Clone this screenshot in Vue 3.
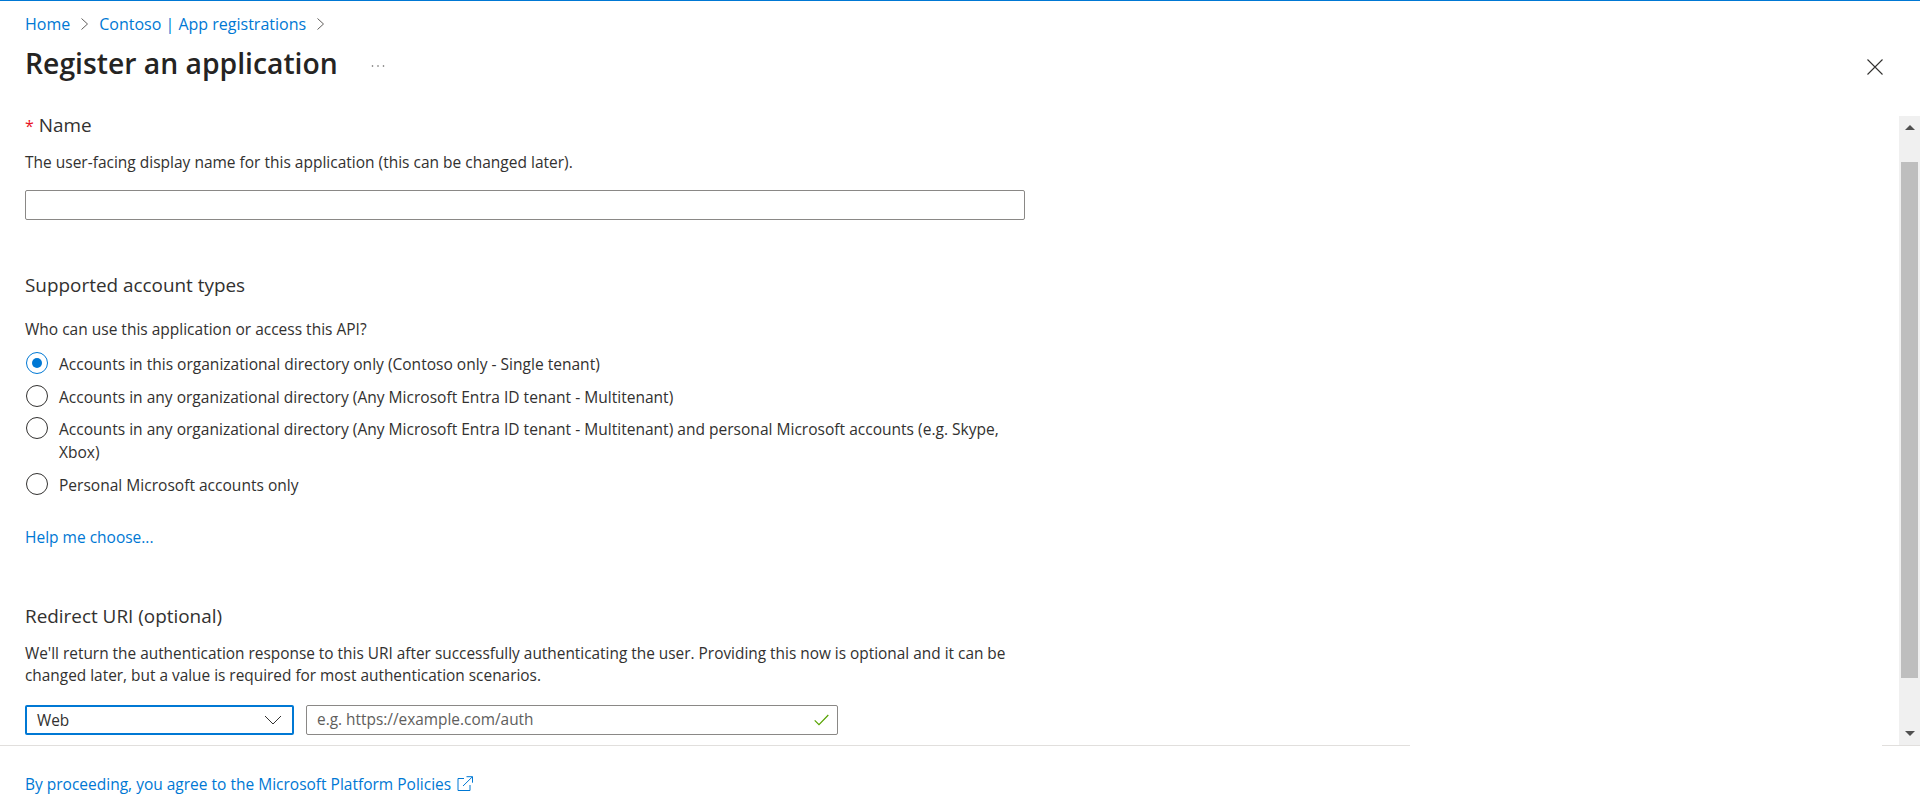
<script setup>
const options = [
  { text: 'Accounts in this organizational directory only (Contoso only - Single tenant)', checked: true },
  { text: 'Accounts in any organizational directory (Any Microsoft Entra ID tenant - Multitenant)', checked: false },
  { text: 'Accounts in any organizational directory (Any Microsoft Entra ID tenant - Multitenant) and personal Microsoft accounts (e.g. Skype, Xbox)', checked: false },
  { text: 'Personal Microsoft accounts only', checked: false },
]
</script>

<template>
  <div class="page">
    <header class="head">
      <nav class="crumbs">
        <a class="link">Home</a>
        <svg class="chev" viewBox="0 0 7 12"><path d="M.5.5L6.5 6l-6 5.5" fill="none" stroke="#605e5c" stroke-width="1"/></svg>
        <a class="link">Contoso | App registrations</a>
        <svg class="chev" viewBox="0 0 7 12"><path d="M.5.5L6.5 6l-6 5.5" fill="none" stroke="#605e5c" stroke-width="1"/></svg>
      </nav>
      <div class="title-row">
        <h1 class="title">Register an application</h1>
        <span class="more">
          <svg width="14" height="4" viewBox="0 0 14 4"><circle cx="1.5" cy="2" r=".8" fill="#605e5c"/><circle cx="7" cy="2" r=".8" fill="#605e5c"/><circle cx="12.5" cy="2" r=".8" fill="#605e5c"/></svg>
        </span>
        <svg class="close" width="16" height="16" viewBox="0 0 16 16"><path d="M.5.5l15 15M15.5.5l-15 15" stroke="#323130" stroke-width="1.1" fill="none"/></svg>
      </div>
    </header>

    <div class="body">
      <main class="content">
        <section class="name-sec">
          <div class="label-lg name-label"><span class="req">*</span> Name</div>
          <p class="text desc">The user-facing display name for this application (this can be changed later).</p>
          <div class="field"></div>
        </section>

        <section class="acct-sec">
          <h2 class="label-lg">Supported account types</h2>
          <p class="text who">Who can use this application or access this API?</p>
          <div class="radios">
            <label v-for="o in options" :key="o.text" class="radio">
              <span class="dot" :class="{ on: o.checked }"></span>
              <span class="text radio-text">{{ o.text }}</span>
            </label>
          </div>
          <a class="link text help">Help me choose...</a>
        </section>

        <section class="uri-sec">
          <h2 class="label-lg">Redirect URI (optional)</h2>
          <p class="text uri-desc">We'll return the authentication response to this URI after successfully authenticating the user. Providing this now is optional and it can be changed later, but a value is required for most authentication scenarios.</p>
          <div class="uri-row">
            <div class="select">
              <span>Web</span>
              <svg width="18" height="10" viewBox="0 0 18 10"><path d="M1 1l8 8 8-8" fill="none" stroke="#323130" stroke-width="1"/></svg>
            </div>
            <div class="uri-input">
              <span class="ph">e.g. https://example.com/auth</span>
              <svg width="15" height="12" viewBox="0 0 15 12"><path d="M.7 6.3l4.3 4.3L14.3 1" fill="none" stroke="#57a300" stroke-width="1.2"/></svg>
            </div>
          </div>
        </section>
      </main>

      <aside class="scroll">
        <span class="arrow up"></span>
        <span class="track"><span class="thumb"></span></span>
        <span class="arrow down"></span>
      </aside>
    </div>

    <div class="rule"><span class="seg-a"></span><span class="seg-b"></span></div>

    <footer class="foot">
      <a class="link">By proceeding, you agree to the Microsoft Platform Policies</a>
      <svg width="16" height="16" viewBox="0 0 16 16"><path d="M7 2.5H1v12h12V9M9.5.7h6v6M15.3.9L6 10" fill="none" stroke="#0078d4" stroke-width="1"/></svg>
    </footer>
  </div>
</template>

<style>
html, body { margin: 0; background: #fff; }
</style>

<style scoped>
.page {
  width: 1920px;
  height: 796px;
  box-sizing: border-box;
  border-top: 1px solid #0078d4;
  display: flex;
  flex-direction: column;
  overflow: hidden;
  font-family: "Open Sans", "Noto Sans", sans-serif;
  color: #323130;
  background: #fff;
}
.link { color: #0078d4; }
.head { height: 115px; padding: 12px 37px 0 25px; box-sizing: border-box; }
.crumbs { display: flex; align-items: center; height: 22px; font-size: 16px; }
.chev { width: 7px; height: 12px; margin: 0 11px; }
.title-row { display: flex; align-items: center; margin-top: 10px; height: 36px; }
.title { margin: 0; font-size: 28.3px; font-weight: 600; color: #252423; }
.more { margin-left: 33px; display: flex; margin-top: 6px; }
.close { margin-left: auto; margin-top: 8px; }

.body { display: flex; height: 629px; }
.content { flex: 1; padding: 0 0 0 25px; }
.label-lg { margin: 0; font-size: 18.9px; font-weight: 400; line-height: 24px; color: #323130; }
.name-label { line-height: 18px; height: 18px; }
.req { color: #e81123; font-size: 16px; }
.text { font-size: 15.5px; line-height: 22px; margin: 0; }
.desc { margin-top: 17px; }
.field { width: 1000px; height: 30px; box-sizing: border-box; margin-top: 17px; border: 1px solid #8a8886; border-radius: 2px; }
.acct-sec { margin-top: 53px; }
.who { margin-top: 21px; }
.radios { margin-top: 12px; width: 1000px; display: flex; flex-direction: column; gap: 9.5px; }
.radio { display: flex; gap: 11px; align-items: flex-start; padding-left: 1px; box-sizing: border-box; }
.dot { width: 22px; height: 22px; box-sizing: border-box; border: 1px solid #323130; border-radius: 50%; flex: none; display: flex; align-items: center; justify-content: center; }
.dot.on { border-color: #0078d4; }
.dot.on::after { content: ""; width: 10px; height: 10px; border-radius: 50%; background: #0078d4; }
.radio-text { font-size: 15.55px; line-height: 23px; padding-top: 1px; margin-bottom: -1px; }
.help { display: block; margin-top: 30px; }
.uri-sec { margin-top: 56px; }
.uri-desc { margin-top: 15px; width: 1000px; font-size: 15.4px; }
.uri-row { display: flex; gap: 12px; margin-top: 18px; }
.select { width: 269px; height: 30px; box-sizing: border-box; border: 2px solid #0078d4; border-radius: 2px; display: flex; align-items: center; justify-content: space-between; padding: 1px 10px 0; font-size: 15.4px; }
.uri-input { width: 532px; height: 30px; box-sizing: border-box; border: 1px solid #8a8886; border-radius: 2px; display: flex; align-items: center; justify-content: space-between; padding: 0 8px 0 10px; font-size: 15.4px; }
.ph { color: #605e5c; }

.scroll { width: 21px; background: #f0f0f0; display: flex; flex-direction: column; align-items: center; }
.arrow { flex: none; width: 0; height: 0; border-left: 5px solid transparent; border-right: 5px solid transparent; }
.arrow.up { border-bottom: 5px solid #505050; margin-top: 9px; }
.arrow.down { border-top: 5px solid #505050; margin-bottom: 9px; }
.track { flex: 1; display: flex; width: 100%; justify-content: center; padding-top: 32px; padding-bottom: 53px; box-sizing: border-box; }
.thumb { width: 17px; background: #bebebe; }

.rule { display: flex; justify-content: space-between; height: 1px; }
.seg-a { width: 1410px; background: #e1dfdd; }
.seg-b { width: 38px; background: #e1dfdd; }
.foot { display: flex; align-items: center; gap: 6px; padding: 27px 0 0 25px; font-size: 15.5px; line-height: 22px; }
</style>
